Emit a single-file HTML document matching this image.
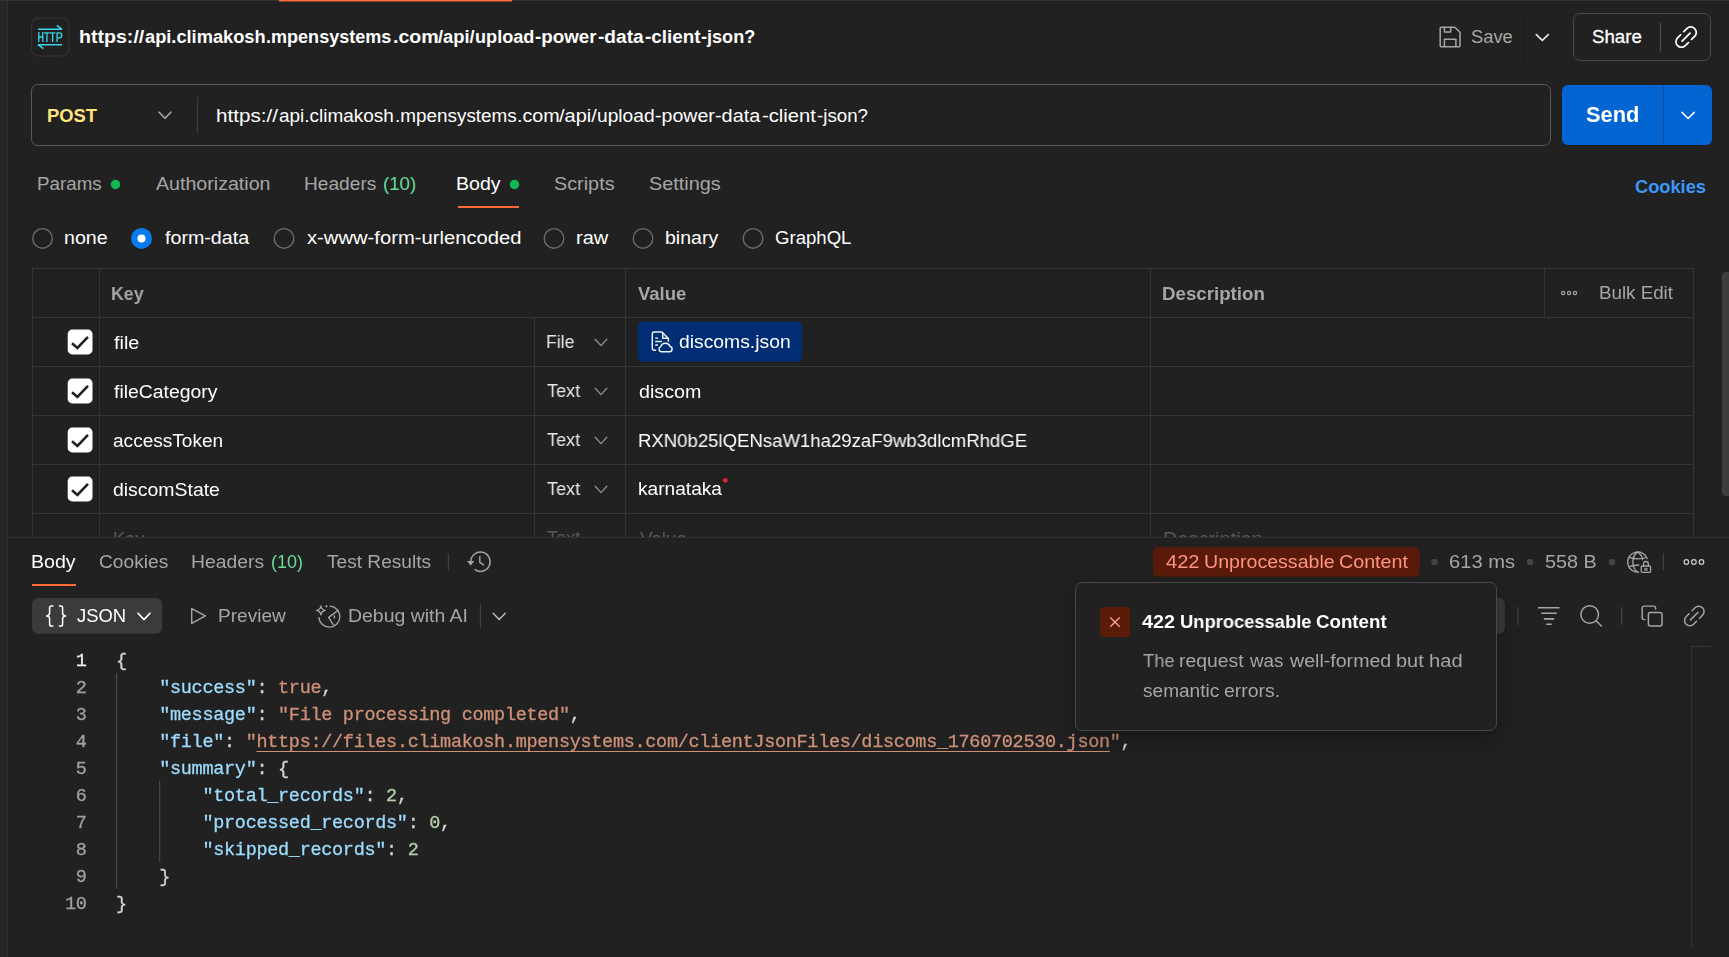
<!DOCTYPE html>
<html><head><meta charset="utf-8"><title>Postman</title>
<style>
html,body{margin:0;padding:0;background:#212121;}
body{width:1729px;height:957px;position:relative;overflow:hidden;font-family:"Liberation Sans",sans-serif;}
.a{position:absolute;}
.g{will-change:transform;}
.t{position:absolute;white-space:pre;line-height:1;transform-origin:0 0;}
.mono{font-family:"Liberation Mono",monospace;font-size:18.5px;letter-spacing:-0.3px;line-height:27px;white-space:pre;-webkit-text-stroke:0.3px currentColor;}
svg{position:absolute;left:0;top:0;overflow:visible;}
</style></head><body>
<!-- left strip -->
<div class="a" style="left:0;top:0;width:7px;height:957px;background:#262626"></div>
<div class="a" style="left:7px;top:0;width:1px;height:957px;background:#303030"></div>
<!-- request pane (clipped at response pane top) -->
<div class="a" style="left:0;top:0;width:1729px;height:537px;overflow:hidden;">
<div class="a" style="left:0;top:0;width:1729px;height:1px;background:#323232"></div>
<div class="a" style="left:279px;top:0;width:233px;height:1px;background:#ff6c37"></div><div class="a" style="left:279px;top:1px;width:233px;height:1px;background:#ff6c37;opacity:.45"></div>
<div class="a" style="left:31px;top:84px;width:1518px;height:60px;border:1px solid #585858;border-radius:7px;"></div>
<div class="a" style="left:1562px;top:85px;width:150px;height:60px;background:#0265d2;border-radius:6px;"></div>
<div class="a" style="left:1573px;top:13px;width:136px;height:46px;border:1px solid #484848;border-radius:7px;"></div>
<div class="a" style="left:458px;top:206px;width:61.2px;height:2.3px;background:#ff6c37"></div>
<div class="a" style="left:32px;top:268px;width:1662px;height:1px;background:#353535"></div>
<div class="a" style="left:32px;top:317px;width:1662px;height:1px;background:#353535"></div>
<div class="a" style="left:32px;top:366px;width:1662px;height:1px;background:#353535"></div>
<div class="a" style="left:32px;top:415px;width:1662px;height:1px;background:#353535"></div>
<div class="a" style="left:32px;top:464px;width:1662px;height:1px;background:#353535"></div>
<div class="a" style="left:32px;top:513px;width:1662px;height:1px;background:#353535"></div>
<div class="a" style="left:32px;top:268px;width:1px;height:272px;background:#353535"></div>
<div class="a" style="left:99px;top:268px;width:1px;height:272px;background:#353535"></div>
<div class="a" style="left:625px;top:268px;width:1px;height:272px;background:#353535"></div>
<div class="a" style="left:1150px;top:268px;width:1px;height:272px;background:#353535"></div>
<div class="a" style="left:1693px;top:268px;width:1px;height:272px;background:#353535"></div>
<div class="a" style="left:534px;top:317px;width:1px;height:223px;background:#353535"></div>
<div class="a" style="left:1544px;top:268px;width:1px;height:49px;background:#353535"></div>
<div class="a" style="left:1722px;top:272px;width:8px;height:224px;background:#3d3d3d;border-radius:4px 0 0 4px"></div>
<svg width="1729" height="957" viewBox="0 0 1729 957">
<rect x="31.6" y="18" width="37.4" height="38" rx="6.5" fill="none" stroke="#2f2f2f" stroke-width="1.4"/>
<g fill="none" stroke="#35d4e8" stroke-width="1.5" stroke-linecap="butt" stroke-linejoin="bevel"><path d="M38 29.3 H62 L56.8 25.4"/><path d="M62 44.7 H38 L43.4 48.7"/></g>
<g fill="none" stroke="#35d4e8" stroke-width="1.35" stroke-linecap="butt" stroke-linejoin="round"><path d="M38.8 32.1 V42.1 M38.8 37 H42.8 M42.8 32.1 V42.1"/><path d="M44.1 32.8 H49.7 M46.9 32.8 V42.1"/><path d="M49.9 32.8 H55.4 M52.6 32.8 V42.1"/><path d="M57.1 42.1 V32.8 H59.2 A2.55 2.55 0 0 1 59.2 37.9 H57.1"/></g>
<path d="M159.1 112.2 L165.0 118.3 L170.9 112.2" fill="none" stroke="#ababab" stroke-width="1.6" stroke-linecap="round" stroke-linejoin="round"/>
<path d="M197.5 97 V133" stroke="#3d3d3d" stroke-width="1.3"/>
<g fill="none" stroke="#a6a6a6" stroke-width="1.5" stroke-linejoin="round" stroke-linecap="round"><path d="M1441.2 27.2 H1454.8 L1460 32.2 V45.7 A1 1 0 0 1 1459 46.7 H1441.2 A1 1 0 0 1 1440.2 45.7 V28.2 A1 1 0 0 1 1441.2 27.2 Z"/><path d="M1444.4 27.4 V32 H1450.7 V27.4"/><path d="M1444.4 46.5 V39.3 H1455.9 V46.5"/></g>
<path d="M1523.6 13 V61" stroke="#1b1b1b" stroke-width="1.2"/>
<path d="M1536.3 34.6 L1542.3 40.4 L1548.3 34.6" fill="none" stroke="#e6e6e6" stroke-width="1.7" stroke-linecap="round" stroke-linejoin="round"/>
<path d="M1660.4 22.3 V51.8" stroke="#4a4a4a" stroke-width="1.3"/>
<g transform="translate(1686.1,37.1) rotate(-45) scale(1)" fill="none" stroke="#ffffff" stroke-width="1.7" stroke-linecap="round"><path d="M2.2 -5.5 H6.6 A5.5 5.5 0 0 1 6.6 5.5 H2.2"/><path d="M-2.2 -5.5 H-6.6 A5.5 5.5 0 0 0 -6.6 5.5 H-2.2"/><path d="M-5.6 0 H5.6"/></g>
<path d="M1663.5 85 V145" stroke="#0a4fa3" stroke-width="1.2"/>
<path d="M1682 112.4 L1688.1 118.5 L1694.2 112.4" fill="none" stroke="#ffffff" stroke-width="1.5" stroke-linecap="round" stroke-linejoin="round"/>
<circle cx="115.5" cy="184.5" r="4.75" fill="#10b854"/>
<circle cx="514.5" cy="184.5" r="4.75" fill="#10b854"/>
<circle cx="42.5" cy="238.4" r="9.8" fill="none" stroke="#6b6b6b" stroke-width="1.4"/>
<circle cx="141.5" cy="238.4" r="10.5" fill="#097bed"/><circle cx="141.5" cy="238.4" r="4" fill="#fff"/>
<circle cx="284" cy="238.4" r="9.8" fill="none" stroke="#6b6b6b" stroke-width="1.4"/>
<circle cx="554" cy="238.4" r="9.8" fill="none" stroke="#6b6b6b" stroke-width="1.4"/>
<circle cx="643" cy="238.4" r="9.8" fill="none" stroke="#6b6b6b" stroke-width="1.4"/>
<circle cx="753" cy="238.4" r="9.8" fill="none" stroke="#6b6b6b" stroke-width="1.4"/>
<circle cx="1563.1999999999998" cy="293" r="1.65" fill="none" stroke="#a6a6a6" stroke-width="1.15"/><circle cx="1569.1" cy="293" r="1.65" fill="none" stroke="#a6a6a6" stroke-width="1.15"/><circle cx="1575.0" cy="293" r="1.65" fill="none" stroke="#a6a6a6" stroke-width="1.15"/>
<rect x="67.7" y="329.6" width="24.8" height="24.8" rx="4.5" fill="#fff"/><path d="M72.0 343.20000000000005 L77.4 348.0 L88.0 336.8" fill="none" stroke="#212121" stroke-width="2.6" stroke-linecap="butt" stroke-linejoin="miter"/>
<path d="M595.2 339.3 L601.0 345.6 L606.8 339.3" fill="none" stroke="#8c8c8c" stroke-width="1.4" stroke-linecap="round" stroke-linejoin="round"/>
<rect x="67.7" y="378.6" width="24.8" height="24.8" rx="4.5" fill="#fff"/><path d="M72.0 392.20000000000005 L77.4 397.0 L88.0 385.8" fill="none" stroke="#212121" stroke-width="2.6" stroke-linecap="butt" stroke-linejoin="miter"/>
<path d="M595.2 388.3 L601.0 394.6 L606.8 388.3" fill="none" stroke="#8c8c8c" stroke-width="1.4" stroke-linecap="round" stroke-linejoin="round"/>
<rect x="67.7" y="427.6" width="24.8" height="24.8" rx="4.5" fill="#fff"/><path d="M72.0 441.20000000000005 L77.4 446.0 L88.0 434.8" fill="none" stroke="#212121" stroke-width="2.6" stroke-linecap="butt" stroke-linejoin="miter"/>
<path d="M595.2 437.3 L601.0 443.6 L606.8 437.3" fill="none" stroke="#8c8c8c" stroke-width="1.4" stroke-linecap="round" stroke-linejoin="round"/>
<rect x="67.7" y="476.6" width="24.8" height="24.8" rx="4.5" fill="#fff"/><path d="M72.0 490.20000000000005 L77.4 495.0 L88.0 483.8" fill="none" stroke="#212121" stroke-width="2.6" stroke-linecap="butt" stroke-linejoin="miter"/>
<path d="M595.2 486.3 L601.0 492.6 L606.8 486.3" fill="none" stroke="#8c8c8c" stroke-width="1.4" stroke-linecap="round" stroke-linejoin="round"/>
<rect x="637.9" y="321.8" width="164.2" height="39.9" rx="5" fill="#002d73"/>
<g fill="none" stroke="#f2f2f2" stroke-width="1.45" stroke-linecap="butt" stroke-linejoin="round"><path d="M656.2 350.2 H654.2 A1.9 1.9 0 0 1 652.3 348.3 V333.9 A1.9 1.9 0 0 1 654.2 332 H661.9 L668.4 338.6 V341.8"/><path d="M662.7 332.6 V338.3 H668"/><path d="M655.2 338.1 H658.1 M655.2 341.5 H661.8 M655.2 345 H657.9"/><path d="M661.3 351.8 H669.6 A2.7 2.7 0 0 0 670.1 346.5 A5 5 0 0 0 660.6 346.9 A2.55 2.55 0 0 0 661.3 351.8 Z"/></g>
<circle cx="725.3" cy="480.3" r="2.4" fill="#e0262d"/>
</svg>
<span id="t0" class="t" style="left:78.74px;top:28.01px;font-size:18.75px;font-weight:700;color:#ffffff;letter-spacing:0.000px;transform:scaleX(1.0446);">https://</span>
<span id="t1" class="t" style="left:144.81px;top:28.01px;font-size:18.75px;font-weight:700;color:#ffffff;letter-spacing:0.000px;transform:scaleX(0.9726);">api.climakosh</span>
<span id="t2" class="t" style="left:266.25px;top:28.01px;font-size:18.75px;font-weight:700;color:#ffffff;letter-spacing:0.000px;transform:scaleX(0.9623);">.mpensystems</span>
<span id="t3" class="t" style="left:392.64px;top:28.01px;font-size:18.75px;font-weight:700;color:#ffffff;letter-spacing:0.000px;transform:scaleX(1.0460);">.com</span>
<span id="t4" class="t" style="left:438.10px;top:28.01px;font-size:18.75px;font-weight:700;color:#ffffff;letter-spacing:0.000px;transform:scaleX(0.9759);">/api/</span>
<span id="t5" class="t" style="left:475.24px;top:28.01px;font-size:18.75px;font-weight:700;color:#ffffff;letter-spacing:0.000px;transform:scaleX(0.9663);">upload</span>
<span id="t6" class="t" style="left:534.80px;top:28.01px;font-size:18.75px;font-weight:700;color:#ffffff;letter-spacing:0.000px;transform:scaleX(1.0023);">-power</span>
<span id="t7" class="t" style="left:597.99px;top:28.01px;font-size:18.75px;font-weight:700;color:#ffffff;letter-spacing:0.000px;transform:scaleX(1.0188);">-data</span>
<span id="t8" class="t" style="left:645.10px;top:28.01px;font-size:18.75px;font-weight:700;color:#ffffff;letter-spacing:0.000px;transform:scaleX(1.0060);">-client</span>
<span id="t9" class="t" style="left:700.82px;top:28.01px;font-size:18.75px;font-weight:700;color:#ffffff;letter-spacing:0.000px;transform:scaleX(0.9654);">-json?</span>
<span id="t10" class="t" style="left:46.99px;top:107.01px;font-size:18.25px;font-weight:700;color:#ffe47e;letter-spacing:-0.000px;transform:scaleX(1.0054);">POST</span>
<span id="t11" class="t" style="left:216.17px;top:107.01px;font-size:18.75px;font-weight:400;color:#ffffff;letter-spacing:0.016px;transform:scaleX(1.1000);">https://</span>
<span id="t12" class="t" style="left:279.19px;top:107.01px;font-size:18.75px;font-weight:400;color:#ffffff;letter-spacing:-0.000px;transform:scaleX(1.0111);">api.climakosh</span>
<span id="t13" class="t" style="left:394.59px;top:107.01px;font-size:18.75px;font-weight:400;color:#ffffff;letter-spacing:0.000px;transform:scaleX(1.0077);">.mpensystems</span>
<span id="t14" class="t" style="left:517.01px;top:107.01px;font-size:18.75px;font-weight:400;color:#ffffff;letter-spacing:0.000px;transform:scaleX(1.0501);">.com</span>
<span id="t15" class="t" style="left:559.00px;top:107.01px;font-size:18.75px;font-weight:400;color:#ffffff;letter-spacing:0.000px;transform:scaleX(1.0667);">/api/</span>
<span id="t16" class="t" style="left:596.67px;top:107.01px;font-size:18.75px;font-weight:400;color:#ffffff;letter-spacing:-0.000px;transform:scaleX(1.0227);">upload</span>
<span id="t17" class="t" style="left:654.77px;top:107.01px;font-size:18.75px;font-weight:400;color:#ffffff;letter-spacing:0.000px;transform:scaleX(1.0432);">-power</span>
<span id="t18" class="t" style="left:715.45px;top:107.01px;font-size:18.75px;font-weight:400;color:#ffffff;letter-spacing:0.000px;transform:scaleX(1.0593);">-data</span>
<span id="t19" class="t" style="left:762.04px;top:107.01px;font-size:18.75px;font-weight:400;color:#ffffff;letter-spacing:-0.000px;transform:scaleX(1.0793);">-client</span>
<span id="t20" class="t" style="left:816.70px;top:107.01px;font-size:18.75px;font-weight:400;color:#ffffff;letter-spacing:0.000px;transform:scaleX(0.9992);">-json?</span>
<span id="t21" class="t" style="left:1471.02px;top:28.00px;font-size:18.75px;font-weight:400;color:#a6a6a6;letter-spacing:0.000px;transform:scaleX(0.9779);">Save</span>
<span id="t22" class="t" style="left:1591.70px;top:28.00px;font-size:18.75px;font-weight:400;color:#ffffff;letter-spacing:0.000px;-webkit-text-stroke:0.3px #fff;transform:scaleX(0.9958);">Share</span>
<span id="t23" class="t g" style="left:1585.99px;top:105.00px;font-size:21.5px;font-weight:700;color:#ffffff;letter-spacing:0.000px;transform:scaleX(1.0152);">Send</span>
<span id="t24" class="t" style="left:36.80px;top:175.00px;font-size:18.75px;font-weight:400;color:#a6a6a6;letter-spacing:0.000px;transform:scaleX(1.0012);">Params</span>
<span id="t25" class="t" style="left:155.80px;top:175.00px;font-size:18.75px;font-weight:400;color:#a6a6a6;letter-spacing:0.000px;transform:scaleX(1.0460);">Authorization</span>
<span id="t26" class="t" style="left:304.37px;top:175.00px;font-size:18.75px;font-weight:400;color:#a6a6a6;letter-spacing:0.000px;transform:scaleX(1.0204);">Headers</span>
<span id="t27" class="t" style="left:382.90px;top:175.00px;font-size:18.75px;font-weight:400;color:#66dc96;letter-spacing:0.000px;transform:scaleX(0.9968);">(10)</span>
<span id="t28" class="t" style="left:456.44px;top:175.00px;font-size:18.75px;font-weight:400;color:#ffffff;letter-spacing:0.000px;transform:scaleX(1.0421);">Body</span>
<span id="t29" class="t" style="left:554.15px;top:175.00px;font-size:18.75px;font-weight:400;color:#a6a6a6;letter-spacing:0.000px;transform:scaleX(1.0568);">Scripts</span>
<span id="t30" class="t" style="left:649.16px;top:175.00px;font-size:18.75px;font-weight:400;color:#a6a6a6;letter-spacing:0.000px;transform:scaleX(1.0562);">Settings</span>
<span id="t31" class="t" style="left:1635.11px;top:178.01px;font-size:18.5px;font-weight:700;color:#3d97f7;letter-spacing:0.000px;transform:scaleX(0.9861);">Cookies</span>
<span id="t32" class="t" style="left:64.34px;top:229.00px;font-size:18.75px;font-weight:400;color:#ffffff;letter-spacing:0.000px;transform:scaleX(1.0483);">none</span>
<span id="t33" class="t" style="left:164.79px;top:229.00px;font-size:18.75px;font-weight:400;color:#ffffff;letter-spacing:0.000px;transform:scaleX(1.0486);">form-data</span>
<span id="t34" class="t" style="left:306.78px;top:229.00px;font-size:18.75px;font-weight:400;color:#ffffff;letter-spacing:0.000px;transform:scaleX(1.0775);">x-www-form-urlencoded</span>
<span id="t35" class="t" style="left:575.72px;top:229.00px;font-size:18.75px;font-weight:400;color:#ffffff;letter-spacing:0.000px;transform:scaleX(1.0663);">raw</span>
<span id="t36" class="t" style="left:664.75px;top:229.00px;font-size:18.75px;font-weight:400;color:#ffffff;letter-spacing:0.000px;transform:scaleX(1.0422);">binary</span>
<span id="t37" class="t" style="left:775.11px;top:229.00px;font-size:18.75px;font-weight:400;color:#ffffff;letter-spacing:0.000px;transform:scaleX(0.9908);">GraphQL</span>
<span id="t38" class="t g" style="left:111.25px;top:285.01px;font-size:18.5px;font-weight:700;color:#a6a6a6;letter-spacing:0.000px;transform:scaleX(0.9587);">Key</span>
<span id="t39" class="t g" style="left:638.40px;top:285.01px;font-size:18.5px;font-weight:700;color:#a6a6a6;letter-spacing:0.000px;transform:scaleX(0.9969);">Value</span>
<span id="t40" class="t g" style="left:1162.29px;top:285.01px;font-size:18.5px;font-weight:700;color:#a6a6a6;letter-spacing:0.000px;transform:scaleX(1.0104);">Description</span>
<span id="t41" class="t g" style="left:1599.21px;top:284.00px;font-size:18.75px;font-weight:400;color:#a6a6a6;letter-spacing:0.000px;transform:scaleX(0.9961);">Bulk Edit</span>
<span id="t42" class="t g" style="left:113.99px;top:334.01px;font-size:18.75px;font-weight:400;color:#ffffff;letter-spacing:0.000px;transform:scaleX(1.0593);">file</span>
<span id="t43" class="t g" style="left:545.99px;top:333.01px;font-size:18.75px;font-weight:400;color:#e6e6e6;letter-spacing:0.000px;transform:scaleX(0.9432);">File</span>
<span id="t44" class="t g" style="left:113.99px;top:383.01px;font-size:18.75px;font-weight:400;color:#ffffff;letter-spacing:0.000px;transform:scaleX(1.0343);">fileCategory</span>
<span id="t45" class="t g" style="left:547.02px;top:382.01px;font-size:18.75px;font-weight:400;color:#e6e6e6;letter-spacing:0.000px;transform:scaleX(0.9623);">Text</span>
<span id="t46" class="t g" style="left:113.49px;top:432.01px;font-size:18.75px;font-weight:400;color:#ffffff;letter-spacing:-0.000px;transform:scaleX(1.0163);">accessToken</span>
<span id="t47" class="t g" style="left:547.02px;top:431.01px;font-size:18.75px;font-weight:400;color:#e6e6e6;letter-spacing:0.000px;transform:scaleX(0.9623);">Text</span>
<span id="t48" class="t g" style="left:113.47px;top:481.01px;font-size:18.75px;font-weight:400;color:#ffffff;letter-spacing:0.000px;transform:scaleX(1.0360);">discomState</span>
<span id="t49" class="t g" style="left:547.02px;top:480.01px;font-size:18.75px;font-weight:400;color:#e6e6e6;letter-spacing:0.000px;transform:scaleX(0.9623);">Text</span>
<span id="t50" class="t g" style="left:679.38px;top:333.01px;font-size:18.75px;font-weight:400;color:#ffffff;letter-spacing:0.000px;transform:scaleX(1.0306);">discoms.json</span>
<span id="t51" class="t g" style="left:638.97px;top:383.01px;font-size:18.75px;font-weight:400;color:#ffffff;letter-spacing:-0.000px;transform:scaleX(1.0492);">discom</span>
<span id="t52" class="t g" style="left:638.21px;top:432.01px;font-size:18.75px;font-weight:400;color:#ffffff;letter-spacing:0.000px;transform:scaleX(0.9903);">RXN0b25lQENsaW1ha29zaF9wb3dlcmRhdGE</span>
<span id="t53" class="t g" style="left:638.48px;top:480.01px;font-size:18.75px;font-weight:400;color:#ffffff;letter-spacing:0.000px;transform:scaleX(1.0195);">karnataka</span>
<span id="t54" class="t g" style="left:112.75px;top:530.01px;font-size:18.75px;font-weight:400;color:#5a5a5a;letter-spacing:0.000px;transform:scaleX(0.9665);">Key</span>
<span id="t55" class="t g" style="left:547.02px;top:529.01px;font-size:18.75px;font-weight:400;color:#5a5a5a;letter-spacing:0.000px;transform:scaleX(0.9623);">Text</span>
<span id="t56" class="t g" style="left:639.70px;top:530.01px;font-size:18.75px;font-weight:400;color:#5a5a5a;letter-spacing:0.000px;transform:scaleX(1.0123);">Value</span>
<span id="t57" class="t g" style="left:1163.40px;top:530.01px;font-size:18.75px;font-weight:400;color:#5a5a5a;letter-spacing:0.000px;transform:scaleX(1.0641);">Description</span>
</div>
<!-- response pane -->
<div class="a" style="left:8px;top:537px;width:1721px;height:1px;background:#333333"></div>
<div class="a" style="left:32px;top:584px;width:44px;height:2.2px;background:#ff6c37"></div>
<svg width="1729" height="957" viewBox="0 0 1729 957">
<path d="M448.4 553.2 V571" stroke="#404040" stroke-width="1.3"/>
<g fill="none" stroke="#a6a6a6" stroke-width="1.45" stroke-linecap="round" stroke-linejoin="round"><path d="M470.8 561.7 A9.65 9.65 0 1 1 475.0 569.7"/><path d="M479.8 556.6 V562.4 L483.7 564.8"/></g>
<path d="M467.0 560.9 L474.4 560.9 L470.7 565.4 Z" fill="#a6a6a6"/>
<rect x="32.1" y="598.1" width="129.9" height="35.7" rx="6" fill="#3b3b3b"/>
<g fill="none" stroke="#ffffff" stroke-width="1.5" stroke-linecap="round" stroke-linejoin="round"><path d="M52.8 606 H51.4 A1.8 1.8 0 0 0 49.6 607.8 V613 C49.6 614.8 48.2 615.8 46.6 615.9 C48.2 616 49.6 617 49.6 618.8 V624.2 A1.8 1.8 0 0 0 51.4 626 H52.8"/><path d="M59.4 606 H60.8 A1.8 1.8 0 0 1 62.6 607.8 V613 C62.6 614.8 64 615.8 65.6 615.9 C64 616 62.6 617 62.6 618.8 V624.2 A1.8 1.8 0 0 1 60.8 626 H59.4"/></g>
<path d="M138 613.2 L144.0 619.6 L150 613.2" fill="none" stroke="#ffffff" stroke-width="1.6" stroke-linecap="round" stroke-linejoin="round"/>
<path d="M191.7 608.6 L205.4 615.9 L191.7 623.4 Z" fill="none" stroke="#a6a6a6" stroke-width="1.4" stroke-linejoin="round"/>
<g fill="none" stroke="#a6a6a6" stroke-width="1.35" stroke-linecap="round" stroke-linejoin="round"><path d="M318.9 617.6 A10.5 10.5 0 1 0 330.2 606.2"/><path d="M320.9 606 C321.4 608.9 322.4 609.9 325.3 610.4 C322.4 610.9 321.4 611.9 320.9 614.8 C320.4 611.9 319.4 610.9 316.5 610.4 C319.4 609.9 320.4 608.9 320.9 606 Z"/><path d="M338.2 610.2 L328.7 617.4 L333.4 625"/><path d="M334.4 616 V618"/></g>
<path d="M326.3 604.4 L326.9 605.7 L328.2 606.2 L326.9 606.8 L326.3 608.1 L325.7 606.8 L324.4 606.2 L325.7 605.7 Z" fill="#a6a6a6"/>
<path d="M480.4 604 V627.8" stroke="#404040" stroke-width="1.3"/>
<path d="M493.2 613.2 L499.2 619.6 L505.2 613.2" fill="none" stroke="#b8b8b8" stroke-width="1.5" stroke-linecap="round" stroke-linejoin="round"/>
<rect x="1153" y="547.3" width="266.8" height="29.4" rx="5" fill="#5a1a0a"/>
<circle cx="1434.5" cy="562" r="3.2" fill="#444444"/>
<circle cx="1530.1" cy="562" r="3.2" fill="#444444"/>
<circle cx="1612" cy="562" r="3.2" fill="#444444"/>
<g fill="none" stroke="#a6a6a6" stroke-width="1.3" stroke-linecap="round" stroke-linejoin="round"><path d="M1638.6 572.1 A10.1 10.1 0 1 1 1647.2 558.6"/><path d="M1637.7 552.1 C1631.2 556 1631.2 568 1637.7 572"/><path d="M1637.7 552.1 C1640.9 554.2 1642.4 557 1642.6 559.8"/><path d="M1629.3 557.3 Q1637.7 560.2 1646.2 557.5 M1629.3 566.7 Q1634 565 1638.8 565"/><path d="M1643.5 566 V563.9 A2.4 2.4 0 0 1 1648.3 563.9 V566"/><rect x="1641.2" y="566" width="9.4" height="6.3" rx="1.2"/><path d="M1645 568.3 V570.2 M1646.8 568.3 V570.2"/></g>
<path d="M1663.3 553.2 V570.6" stroke="#404040" stroke-width="1.3"/>
<circle cx="1686.3500000000001" cy="562" r="2.3" fill="none" stroke="#cccccc" stroke-width="1.2"/><circle cx="1693.9" cy="562" r="2.3" fill="none" stroke="#cccccc" stroke-width="1.2"/><circle cx="1701.45" cy="562" r="2.3" fill="none" stroke="#cccccc" stroke-width="1.2"/>
<rect x="1470" y="598.1" width="34.8" height="35.7" rx="6" fill="#3b3b3b"/>
<path d="M1517.9 607 V625" stroke="#404040" stroke-width="1.4"/>
<g fill="none" stroke="#a6a6a6" stroke-width="1.6" stroke-linecap="butt"><path d="M1538 607.7 H1559.6 M1541.2 613.3 H1556.8 M1543.8 618.9 H1554.2 M1546.2 624.3 H1551.7"/></g>
<g fill="none" stroke="#a6a6a6" stroke-width="1.45" stroke-linecap="round"><circle cx="1589.7" cy="614.5" r="8.8"/><path d="M1596.2 621 L1601.4 626.1"/></g>
<path d="M1621.6 607 V625" stroke="#404040" stroke-width="1.4"/>
<g fill="none" stroke="#a6a6a6" stroke-width="1.45" stroke-linecap="round" stroke-linejoin="round"><rect x="1648.4" y="612.4" width="13.6" height="13.5" rx="2"/><path d="M1645 619.6 H1644.2 A2 2 0 0 1 1642.2 617.6 V608.1 A2 2 0 0 1 1644.2 606.1 H1653.6 A2 2 0 0 1 1655.6 608.1 V608.9"/></g>
<g transform="translate(1694.3,616.05) rotate(-45) scale(0.96)" fill="none" stroke="#a6a6a6" stroke-width="1.55" stroke-linecap="round"><path d="M2.2 -5.5 H6.6 A5.5 5.5 0 0 1 6.6 5.5 H2.2"/><path d="M-2.2 -5.5 H-6.6 A5.5 5.5 0 0 0 -6.6 5.5 H-2.2"/><path d="M-5.6 0 H5.6"/></g>
<path d="M1691.5 948.5 V646.4 H1711.8" fill="none" stroke="#333333" stroke-width="1.2"/>
<path d="M116.6 673 V888.5" stroke="#4d4d4d" stroke-width="1.1"/>
<path d="M159.7 781 V861.5" stroke="#4d4d4d" stroke-width="1.1"/>
</svg>
<div class="a mono" style="left:40px;top:647.5px;width:46.6px;text-align:right;color:#9a9a9a"><div style="color:#f2f2f2">1</div><div style="color:#a0a0a0">2</div><div style="color:#a0a0a0">3</div><div style="color:#a0a0a0">4</div><div style="color:#a0a0a0">5</div><div style="color:#a0a0a0">6</div><div style="color:#a0a0a0">7</div><div style="color:#a0a0a0">8</div><div style="color:#a0a0a0">9</div><div style="color:#a0a0a0">10</div></div><div class="a mono" style="left:116.0px;top:647.5px;"><div><span style="color:#d4d4d4">{</span></div><div>    <span style="color:#9cdcfe">"success"</span><span style="color:#d4d4d4">: </span><span style="color:#ce9178">true</span><span style="color:#d4d4d4">,</span></div><div>    <span style="color:#9cdcfe">"message"</span><span style="color:#d4d4d4">: </span><span style="color:#ce9178">"File processing completed"</span><span style="color:#d4d4d4">,</span></div><div>    <span style="color:#9cdcfe">"file"</span><span style="color:#d4d4d4">: </span><span style="color:#ce9178">"<span style="text-decoration:underline;text-underline-offset:4px;text-decoration-thickness:1px;text-decoration-skip-ink:none">https://files.climakosh.mpensystems.com/clientJsonFiles/discoms_1760702530.json</span>"</span><span style="color:#d4d4d4">,</span></div><div>    <span style="color:#9cdcfe">"summary"</span><span style="color:#d4d4d4">: {</span></div><div>        <span style="color:#9cdcfe">"total_records"</span><span style="color:#d4d4d4">: </span><span style="color:#b5cea8">2</span><span style="color:#d4d4d4">,</span></div><div>        <span style="color:#9cdcfe">"processed_records"</span><span style="color:#d4d4d4">: </span><span style="color:#b5cea8">0</span><span style="color:#d4d4d4">,</span></div><div>        <span style="color:#9cdcfe">"skipped_records"</span><span style="color:#d4d4d4">: </span><span style="color:#b5cea8">2</span></div><div>    <span style="color:#d4d4d4">}</span></div><div><span style="color:#d4d4d4">}</span></div></div>
<span id="t58" class="t" style="left:30.53px;top:553.01px;font-size:18.75px;font-weight:400;color:#ffffff;letter-spacing:-0.000px;transform:scaleX(1.0445);">Body</span>
<span id="t59" class="t" style="left:99.28px;top:553.01px;font-size:18.75px;font-weight:400;color:#a6a6a6;letter-spacing:0.000px;transform:scaleX(1.0217);">Cookies</span>
<span id="t60" class="t" style="left:191.05px;top:553.01px;font-size:18.75px;font-weight:400;color:#a6a6a6;letter-spacing:0.000px;transform:scaleX(1.0306);">Headers</span>
<span id="t61" class="t" style="left:270.55px;top:553.01px;font-size:18.75px;font-weight:400;color:#66dc96;letter-spacing:0.000px;transform:scaleX(0.9582);">(10)</span>
<span id="t62" class="t" style="left:326.59px;top:553.01px;font-size:18.75px;font-weight:400;color:#a6a6a6;letter-spacing:0.000px;transform:scaleX(1.0194);">Test Results</span>
<span id="t63" class="t" style="left:77.40px;top:607.00px;font-size:18.25px;font-weight:400;color:#ffffff;letter-spacing:0.000px;transform:scaleX(1.0087);">JSON</span>
<span id="t64" class="t" style="left:217.68px;top:607.00px;font-size:18.75px;font-weight:400;color:#a6a6a6;letter-spacing:0.000px;transform:scaleX(1.0161);">Preview</span>
<span id="t65" class="t" style="left:348.04px;top:607.01px;font-size:18.75px;font-weight:400;color:#a6a6a6;letter-spacing:0.000px;transform:scaleX(1.0368);">Debug with AI</span>
<span id="t66" class="t g" style="left:1165.57px;top:553.01px;font-size:18.75px;font-weight:400;color:#ff9480;letter-spacing:0.000px;transform:scaleX(1.0716);">422</span>
<span id="t67" class="t g" style="left:1204.14px;top:553.01px;font-size:18.75px;font-weight:400;color:#ff9480;letter-spacing:0.000px;transform:scaleX(1.0452);">Unprocessable</span>
<span id="t68" class="t g" style="left:1338.96px;top:553.01px;font-size:18.75px;font-weight:400;color:#ff9480;letter-spacing:0.000px;transform:scaleX(1.0485);">Content</span>
<span id="t69" class="t" style="left:1449.03px;top:553.01px;font-size:18.75px;font-weight:400;color:#a6a6a6;letter-spacing:0.000px;transform:scaleX(1.0732);">613 ms</span>
<span id="t70" class="t" style="left:1545.06px;top:553.01px;font-size:18.75px;font-weight:400;color:#a6a6a6;letter-spacing:0.000px;transform:scaleX(1.0571);">558 B</span>
<!-- popup -->
<div class="a" style="left:1075px;top:582px;width:420px;height:147px;border:1px solid #484848;border-radius:7px;background:#212121;box-shadow:0 8px 22px rgba(0,0,0,0.32);"></div>
<svg width="1729" height="957" viewBox="0 0 1729 957">
<rect x="1100.1" y="606.9" width="30" height="30" rx="3" fill="#5b1b09"/><path d="M1110.3 617.5 L1119.7 626.8 M1119.7 617.5 L1110.3 626.8" stroke="#ff9d8c" stroke-width="1.4" fill="none"/>
</svg>
<span id="t71" class="t g" style="left:1142.39px;top:613.00px;font-size:18.5px;font-weight:700;color:#ffffff;letter-spacing:0.000px;transform:scaleX(1.0708);">422</span>
<span id="t72" class="t g" style="left:1180.01px;top:613.00px;font-size:18.5px;font-weight:700;color:#ffffff;letter-spacing:0.000px;transform:scaleX(0.9913);">Unprocessable</span>
<span id="t73" class="t g" style="left:1315.89px;top:613.00px;font-size:18.5px;font-weight:700;color:#ffffff;letter-spacing:0.000px;transform:scaleX(1.0114);">Content</span>
<span id="t74" class="t g" style="left:1142.81px;top:652.00px;font-size:18.75px;font-weight:400;color:#a6a6a6;letter-spacing:0.000px;transform:scaleX(0.9749);">The</span>
<span id="t75" class="t g" style="left:1178.96px;top:652.00px;font-size:18.75px;font-weight:400;color:#a6a6a6;letter-spacing:0.000px;transform:scaleX(1.0322);">request</span>
<span id="t76" class="t g" style="left:1250.10px;top:652.00px;font-size:18.75px;font-weight:400;color:#a6a6a6;letter-spacing:0.000px;transform:scaleX(1.0010);">was</span>
<span id="t77" class="t g" style="left:1290.00px;top:652.00px;font-size:18.75px;font-weight:400;color:#a6a6a6;letter-spacing:0.000px;transform:scaleX(1.0451);">well-formed</span>
<span id="t78" class="t g" style="left:1395.53px;top:652.00px;font-size:18.75px;font-weight:400;color:#a6a6a6;letter-spacing:0.000px;transform:scaleX(1.0624);">but</span>
<span id="t79" class="t g" style="left:1428.60px;top:652.00px;font-size:18.75px;font-weight:400;color:#a6a6a6;letter-spacing:-0.000px;transform:scaleX(1.0743);">had</span>
<span id="t80" class="t g" style="left:1142.69px;top:682.00px;font-size:18.75px;font-weight:400;color:#a6a6a6;letter-spacing:0.000px;transform:scaleX(1.0168);">semantic</span>
<span id="t81" class="t g" style="left:1224.37px;top:682.00px;font-size:18.75px;font-weight:400;color:#a6a6a6;letter-spacing:0.000px;transform:scaleX(1.0374);">errors.</span>
</body></html>
